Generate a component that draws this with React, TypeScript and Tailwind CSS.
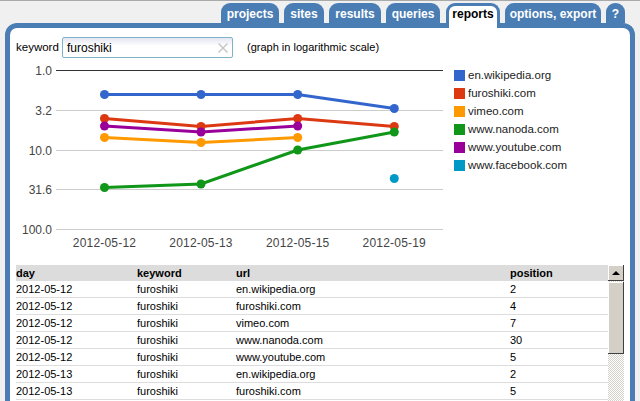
const tabs = [
  { label: 'projects', width: 'w-[58px]' },
  { label: 'sites', width: 'w-[40px]' },
  { label: 'results', width: 'w-[52px]' },
  { label: 'queries', width: 'w-[54px] mr-[1px]' },
  { label: 'reports', width: 'w-[54px]', active: true },
  { label: 'options, export', width: 'w-[96px]' },
  { label: '?', width: 'w-[19px]' },
];

const xs = [104.5, 201, 297.7, 394.3];
const days = ['2012-05-12', '2012-05-13', '2012-05-15', '2012-05-19'];
const grid = [
  { y: 70.5, label: '1.0', color: '#333333' },
  { y: 110.5, label: '3.2', color: '#cccccc' },
  { y: 150.5, label: '10.0', color: '#cccccc' },
  { y: 189.5, label: '31.6', color: '#cccccc' },
  { y: 229.5, label: '100.0', color: '#cccccc' },
];

const series = [
  { name: 'furoshiki.com', color: '#dc3912', ys: [118.5, 126.5, 118.5, 126.5] },
  { name: 'vimeo.com', color: '#ff9900', ys: [137.5, 142.5, 137.5] },
  { name: 'www.youtube.com', color: '#990099', ys: [126, 132, 126] },
  { name: 'en.wikipedia.org', color: '#3366cc', ys: [94.5, 94.5, 94.5, 108.5] },
  { name: 'www.nanoda.com', color: '#109618', ys: [187.5, 184, 150, 132] },
];

const legend = [
  { name: 'en.wikipedia.org', box: 'bg-[#3366cc]' },
  { name: 'furoshiki.com', box: 'bg-[#dc3912]' },
  { name: 'vimeo.com', box: 'bg-[#ff9900]' },
  { name: 'www.nanoda.com', box: 'bg-[#109618]' },
  { name: 'www.youtube.com', box: 'bg-[#990099]' },
  { name: 'www.facebook.com', box: 'bg-[#0099c6]' },
];

const rows = [
  ['2012-05-12', 'furoshiki', 'en.wikipedia.org', '2'],
  ['2012-05-12', 'furoshiki', 'furoshiki.com', '4'],
  ['2012-05-12', 'furoshiki', 'vimeo.com', '7'],
  ['2012-05-12', 'furoshiki', 'www.nanoda.com', '30'],
  ['2012-05-12', 'furoshiki', 'www.youtube.com', '5'],
  ['2012-05-13', 'furoshiki', 'en.wikipedia.org', '2'],
  ['2012-05-13', 'furoshiki', 'furoshiki.com', '5'],
];

function Chart() {
  return (
    <svg width="438" height="195" viewBox="16 62 438 195" className="shrink-0" fontFamily="'Liberation Sans', Arial, sans-serif">
      {grid.map((g) => (
        <g key={g.label}>
          <line x1="56" x2="443" y1={g.y} y2={g.y} stroke={g.color} />
          <text x="52" y={g.y + 4.5} textAnchor="end" fontSize="12" fill="#444444">
            {g.label}
          </text>
        </g>
      ))}
      {days.map((d, i) => (
        <text key={d} x={xs[i]} y="247" textAnchor="middle" fontSize="12" letterSpacing="0.2" fill="#444444">
          {d}
        </text>
      ))}
      {series.map((s) => (
        <g key={s.name}>
          <polyline
            points={s.ys.map((y, i) => `${xs[i]},${y}`).join(' ')}
            fill="none"
            stroke={s.color}
            strokeWidth="3"
          />
          {s.ys.map((y, i) => (
            <circle key={i} cx={xs[i]} cy={y} r="4.5" fill={s.color} />
          ))}
        </g>
      ))}
      <circle cx={xs[3]} cy="178.5" r="4.5" fill="#0099c6" />
    </svg>
  );
}

export default function App() {
  return (
    <div className="w-[640px] h-[401px] overflow-hidden bg-[#f0f0f0] border-t border-[#aaaaaa] font-['Liberation_Sans',Arial,sans-serif] text-[11px] text-black">
      <nav className="flex justify-end gap-[5px] pt-[2px] pr-[15px] h-[22px]">
        {tabs.map((tab) =>
          tab.active ? (
            <div
              key={tab.label}
              className={`${tab.width} h-[25px] relative z-10 bg-white border-x-[3px] border-t-[3px] border-[#4a7db4] rounded-t-[9px] flex justify-center pt-[1px] text-[12px] font-bold leading-[14px]`}
            >
              {tab.label}
            </div>
          ) : (
            <div
              key={tab.label}
              className={`${tab.width} h-[20px] bg-[#4a7db4] rounded-t-[9px] flex justify-center pt-[4px] text-[12px] font-bold leading-[14px] text-white`}
            >
              {tab.label}
            </div>
          ),
        )}
      </nav>

      <div className="mx-[5px] h-[378px] bg-white border-x-[5px] border-t-[5px] border-[#4a7db4] rounded-t-[12px] pl-[6px] pr-[6px] pt-[9px]">
        <div className="flex items-center h-[21px]">
          <span className="w-[46px] text-[11.5px]">keyword</span>
          <div className="w-[171px] h-[21px] flex items-center justify-between pl-[4px] pr-[4px] border border-[#7fb3c8] rounded-[2px] bg-[linear-gradient(#e4e6f2,#ffffff_8px)] text-[12px]">
            <span>furoshiki</span>
            <svg width="10" height="10" viewBox="0 0 10 10" stroke="#c8c8c8" strokeWidth="1.5">
              <path d="M0.5 0.5 L9.5 9.5 M9.5 0.5 L0.5 9.5" />
            </svg>
          </div>
          <span className="ml-[14px]">(graph in logarithmic scale)</span>
        </div>

        <div className="flex mt-[4px]">
          <Chart />
          <ul className="pt-[8px] text-[11.5px] text-[#222222]">
            {legend.map((item) => (
              <li key={item.name} className="flex items-start gap-[3px] h-[18px] leading-[11px]">
                <span className={`w-[11px] h-[11px] ${item.box}`} />
                <span>{item.name}</span>
              </li>
            ))}
          </ul>
        </div>

        <div className="flex items-start mt-[8px] w-[608px]">
          <table className="w-[592px] table-fixed border-separate border-spacing-0 text-left leading-[14px]">
            <thead>
              <tr className="bg-[#dcdcdc]">
                <th className="w-[121px] h-[16px] p-0 font-bold">day</th>
                <th className="w-[99px] h-[16px] p-0 font-bold">keyword</th>
                <th className="w-[274px] h-[16px] p-0 font-bold">url</th>
                <th className="h-[16px] p-0 font-bold">position</th>
              </tr>
            </thead>
            <tbody>
              {rows.map((row, i) => (
                <tr key={i}>
                  {row.map((cell, j) => (
                    <td key={j} className="h-[17px] p-0 border-b border-[#dddddd]">
                      {cell}
                    </td>
                  ))}
                </tr>
              ))}
            </tbody>
          </table>

          <div className="w-[16px] h-[136px] flex flex-col bg-[repeating-conic-gradient(#d4d0c8_0_25%,#ffffff_0_50%)] bg-[length:2px_2px]">
            <div className="h-[16px] flex items-center justify-center bg-[#d4d0c8] shadow-[inset_-1px_-1px_0_#404040,inset_1px_1px_0_#ffffff]">
              <svg width="8" height="4" viewBox="0 0 8 4" fill="#000000">
                <path d="M4 0 L8 4 L0 4 Z" />
              </svg>
            </div>
            <div className="h-[72px] mt-[1px] bg-[#d4d0c8] shadow-[inset_-1px_-1px_0_#404040,inset_1px_1px_0_#ffffff]" />
          </div>
        </div>
      </div>
    </div>
  );
}
